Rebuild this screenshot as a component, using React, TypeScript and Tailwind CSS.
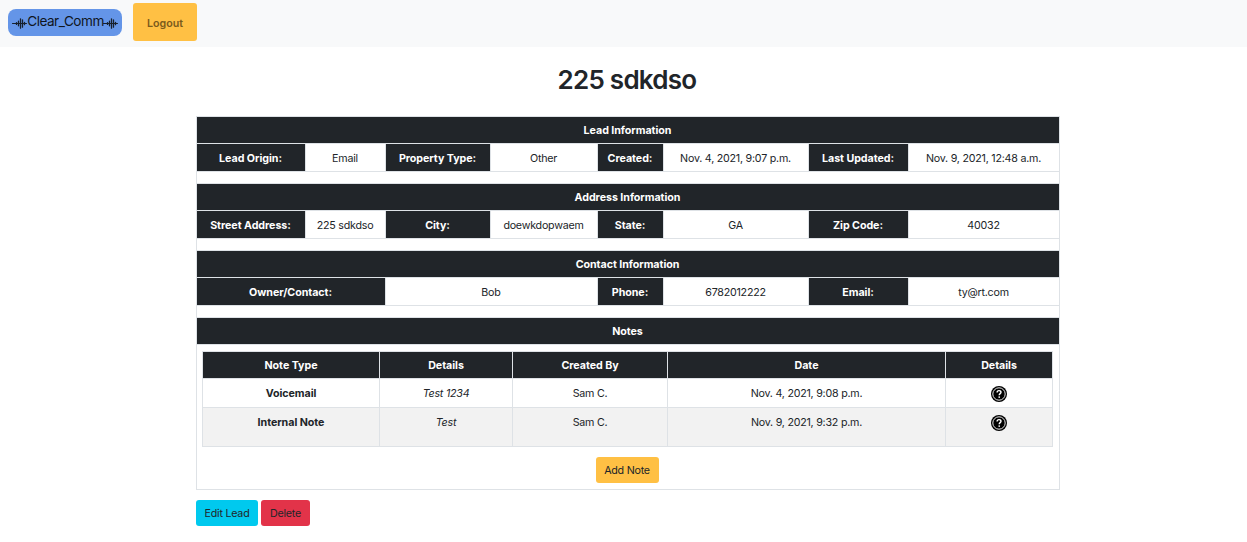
import type { ReactNode } from "react";

const leadCols = "grid grid-cols-[109px_80px_105px_107px_66px_145px_100px_151px]";
const noteCols = "grid grid-cols-[177px_133px_155px_278px_107px]";

function Wave() {
  return (
    <svg className="mt-px h-3.5 w-[15px] shrink-0" viewBox="0 0 15 14" fill="none" stroke="#17202c" strokeLinecap="round">
      <path strokeWidth="1" d="M0.5 7.5h14" />
      <path strokeWidth="1.3" d="M4.5 6.6v1.8M6.5 5.2v4.6M8.5 2.8v9.4M10.5 3.8v7.4M12.5 6.3v2.4" />
    </svg>
  );
}

function HelpIcon() {
  return (
    <svg className="mt-px size-4" viewBox="0 0 16 16">
      <circle cx="8" cy="8" r="8" fill="#000" />
      <circle cx="8" cy="8" r="6.2" fill="none" stroke="#fff" strokeWidth="0.9" />
      <path d="M6.1 6.4C6.1 5.2 6.9 4.6 8 4.6s2 .6 2 1.7c0 1.3-1.8 1.4-1.8 2.9" fill="none" stroke="#fff" strokeWidth="1.4" />
      <circle cx="8.2" cy="11.1" r="0.85" fill="#fff" />
    </svg>
  );
}

function Section({ title }: { title: string }) {
  return (
    <div className="flex h-[27px] items-center justify-center border-r border-b border-[#dee2e6] bg-[#212529] pt-px pr-px font-bold tracking-[-0.05px] text-white">
      {title}
    </div>
  );
}

function Label({ children, wide = false }: { children: ReactNode; wide?: boolean }) {
  return (
    <div className={`flex items-center justify-center border-r border-b border-[#dee2e6] bg-[#212529] pt-0.5 pr-px font-bold tracking-[-0.05px] text-white ${wide ? "col-span-2" : ""}`}>
      {children}
    </div>
  );
}

function Value({ children, wide = false }: { children: ReactNode; wide?: boolean }) {
  return (
    <div className={`flex items-center justify-center border-r border-b border-[#dee2e6] pt-0.5 pr-px ${wide ? "col-span-2" : ""}`}>
      {children}
    </div>
  );
}

function Spacer() {
  return <div className="h-3 border-r border-b border-[#dee2e6]" />;
}

const notes = [
  { type: "Voicemail", details: "Test 1234", by: "Sam C.", date: "Nov. 4, 2021, 9:08 p.m.", height: "h-[29px]" },
  { type: "Internal Note", details: "Test", by: "Sam C.", date: "Nov. 9, 2021, 9:32 p.m.", height: "h-[39px] bg-[#f2f2f2]" },
];

const noteCell = "flex h-full justify-center border-r border-b border-[#dee2e6] pt-[6px]";

export default function App() {
  return (
    <div className="h-[542px] bg-white font-['Inter',sans-serif] text-[10.7px] leading-[17px] tracking-[-0.23px] text-[#212529]">
      <nav className="flex h-[47px] items-start bg-[#f8f9fa] pt-[3px] pl-2">
        <div className="mt-1.5 flex h-[27px] w-[114px] items-center justify-center rounded-lg bg-[#6495e8]">
          <Wave />
          <span className="mr-[-1px] pb-[3px] text-[13.6px] leading-5 tracking-[-0.5px] text-[#10161e]">Clear_Comm</span>
          <Wave />
        </div>
        <button className="ml-[11px] h-[38px] w-16 rounded-[3px] bg-[#ffc044] pt-0.5 font-semibold tracking-[0px] text-[#7a5a1c]">Logout</button>
      </nav>

      <main className="ml-[196px] w-[864px]">
        <h1 className="h-[69px] pt-[17px] pr-0.5 text-center text-[26px] leading-8 font-[560] tracking-[-0.75px]">225 sdkdso</h1>

        <div className="h-[374px] border-t border-l border-[#dee2e6]">
          <Section title="Lead Information" />
          <div className={`${leadCols} h-7`}>
            <Label>Lead Origin:</Label><Value>Email</Value>
            <Label>Property Type:</Label><Value>Other</Value>
            <Label>Created:</Label><Value>Nov. 4, 2021, 9:07 p.m.</Value>
            <Label>Last Updated:</Label><Value>Nov. 9, 2021, 12:48 a.m.</Value>
          </div>
          <Spacer />
          <Section title="Address Information" />
          <div className={`${leadCols} h-7`}>
            <Label>Street Address:</Label><Value>225 sdkdso</Value>
            <Label>City:</Label><Value>doewkdopwaem</Value>
            <Label>State:</Label><Value>GA</Value>
            <Label>Zip Code:</Label><Value>40032</Value>
          </div>
          <Spacer />
          <Section title="Contact Information" />
          <div className={`${leadCols} h-7`}>
            <Label wide>Owner/Contact:</Label><Value wide>Bob</Value>
            <Label>Phone:</Label><Value>6782012222</Value>
            <Label>Email:</Label><Value>ty@rt.com</Value>
          </div>
          <Spacer />
          <Section title="Notes" />
          <div className="h-[145px] border-r border-b border-[#dee2e6] pt-[6px] pl-[5px]">
            <div className="w-[851px] border-t border-l border-[#dee2e6]">
              <div className={`${noteCols} h-[27px] bg-[#212529] font-bold tracking-[-0.05px] text-white`}>
                {["Note Type", "Details", "Created By", "Date", "Details"].map((heading, i) => (
                  <div key={i} className="flex items-center justify-center border-r border-b border-[#dee2e6] pt-px">{heading}</div>
                ))}
              </div>
              {notes.map((note) => (
                <div key={note.type} className={`${noteCols} ${note.height}`}>
                  <div className={`${noteCell} font-bold tracking-[-0.05px]`}>{note.type}</div>
                  <div className={`${noteCell} italic`}>{note.details}</div>
                  <div className={noteCell}>{note.by}</div>
                  <div className={noteCell}>{note.date}</div>
                  <div className={noteCell}><HelpIcon /></div>
                </div>
              ))}
            </div>
            <div className="flex justify-center pt-[10px] pr-[7px]">
              <button className="h-[26px] w-[63px] rounded-[3px] bg-[#ffc044] pt-px">Add Note</button>
            </div>
          </div>
        </div>

        <div className="flex gap-[3px] pt-[10px]">
          <button className="h-[26px] w-[62px] rounded-[3px] bg-[#00c9ee] pt-px">Edit Lead</button>
          <button className="h-[26px] w-[49px] rounded-[3px] bg-[#e23349] pt-px">Delete</button>
        </div>
      </main>
    </div>
  );
}
